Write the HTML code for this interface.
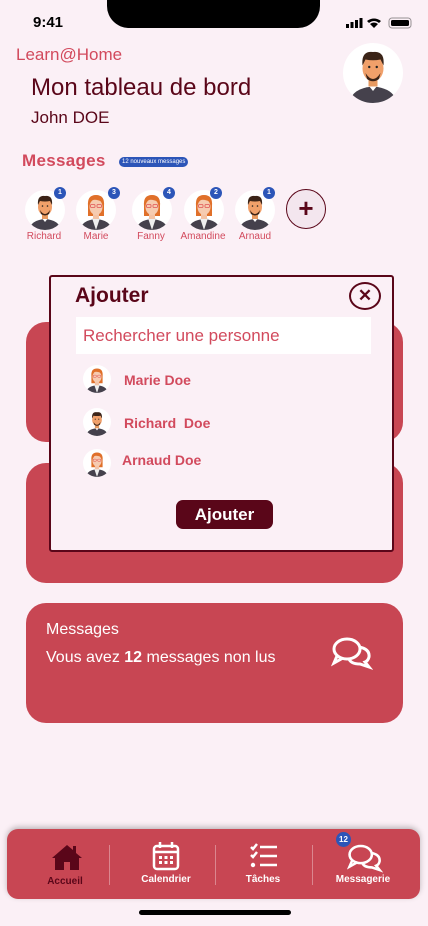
<!DOCTYPE html>
<html><head><meta charset="utf-8"><style>
*{margin:0;padding:0;box-sizing:border-box}
body{width:428px;height:926px;background:#fbf0f6;font-family:"Liberation Sans",sans-serif;position:relative;overflow:hidden}
.abs{position:absolute}
.notch{left:107px;top:0;width:213px;height:28px;background:#000;border-radius:0 0 22px 22px}
.card{left:26px;width:377px;height:120px;background:#c84653;border-radius:20px}
.av{position:absolute;width:40px;height:40px}
.badge{position:absolute;width:12px;height:12px;border-radius:6px;background:#2c55b8;color:#fff;font-size:7px;font-weight:bold;text-align:center;line-height:12px}
.nm{position:absolute;font-size:10px;color:#d24a5d;width:60px;text-align:center}
.nav{left:7px;top:829px;width:413px;height:70px;background:#c84653;border-radius:11px;box-shadow:0 -2px 6px rgba(0,0,0,.25)}
.nl{position:absolute;font-size:10px;font-weight:bold;color:#fff;text-align:center;width:90px}
.sep{position:absolute;top:16px;width:1px;height:40px;background:rgba(255,255,255,.35)}
</style></head><body>
<svg width="0" height="0" style="position:absolute">
<defs>
<symbol id="man" viewBox="0 0 40 40"><circle cx="20" cy="20" r="20" fill="#fff"/><clipPath id="cm"><circle cx="20" cy="20" r="20"/></clipPath><g clip-path="url(#cm)"><path d="M4 40 Q6 30 20 29 Q34 30 36 40Z" fill="#45414c"/><path d="M16 27 L20 32 L24 27Z" fill="#fff"/><rect x="17" y="22" width="6" height="7" fill="#e79a61"/><ellipse cx="20" cy="17" rx="7" ry="8.5" fill="#f0a06a"/><path d="M13 15 Q12 5 20 6 Q28 5 27 15 L25 11 Q20 12 15 11Z" fill="#3b2418"/><path d="M15 20 Q20 28 25 20 L24 24 Q20 27 16 24Z" fill="#3b2418"/><circle cx="17.5" cy="16" r=".8" fill="#222"/><circle cx="22.5" cy="16" r=".8" fill="#222"/></g></symbol>
<symbol id="wom" viewBox="0 0 40 40"><circle cx="20" cy="20" r="20" fill="#fff"/><clipPath id="cw"><circle cx="20" cy="20" r="20"/></clipPath><g clip-path="url(#cw)"><path d="M4 40 Q6 30 20 29 Q34 30 36 40Z" fill="#45414c"/><path d="M16 28 L20 40 L24 28Z" fill="#eee"/><path d="M12 16 Q11 5 20 5 Q29 5 28 16 L28 26 L12 26Z" fill="#e0702a"/><rect x="17" y="21" width="6" height="8" fill="#f3c3a6"/><ellipse cx="20" cy="17" rx="6.5" ry="8" fill="#f6cbb0"/><path d="M13 13 Q16 7 27 12 L26 9 Q20 5 14 9Z" fill="#e0702a"/><rect x="14.5" y="14.5" width="4.5" height="3" rx="1" fill="none" stroke="#e05555" stroke-width=".8"/><rect x="21" y="14.5" width="4.5" height="3" rx="1" fill="none" stroke="#e05555" stroke-width=".8"/></g></symbol>
</defs></svg>

<div class="abs notch"></div>
<div class="abs" style="left:33px;top:14px;font-size:15px;font-weight:bold">9:41</div>
<svg class="abs" style="left:346px;top:17px" width="68" height="12" viewBox="0 0 68 12"><rect x="0" y="7" width="3" height="4" fill="#000"/><rect x="4.5" y="5" width="3" height="6" fill="#000"/><rect x="9" y="3" width="3" height="8" fill="#000"/><rect x="13.5" y="1" width="3" height="10" fill="#000"/><path d="M21 4 Q28 -1 35 4 L33 6 Q28 2 23 6Z M24 7 Q28 4 32 7 L28 11Z" fill="#000"/><rect x="43" y="1" width="22" height="10" rx="3" fill="none" stroke="#000" stroke-opacity=".4"/><rect x="45" y="3" width="18" height="6" rx="1.5" fill="#000"/></svg>

<div class="abs" style="left:16px;top:45px;font-size:17px;color:#d24a5d">Learn@Home</div>
<div class="abs" style="left:31px;top:74px;font-size:24px;color:#5a0619">Mon tableau de bord</div>
<div class="abs" style="left:31px;top:108px;font-size:17px;color:#5a0619">John DOE</div>
<svg class="abs" style="left:343px;top:43px" width="60" height="60"><use href="#man"/></svg>

<div class="abs" style="left:22px;top:151px;font-size:17px;font-weight:bold;color:#d24a5d;letter-spacing:.3px">Messages</div>
<div class="abs" style="left:119px;top:157px;background:#2c55b8;color:#fff;font-size:6px;border-radius:5px;padding:1px 3px;line-height:8px">12 nouveaux messages</div>

<svg class="av" style="left:25px;top:190px"><use href="#man"/></svg><div class="badge" style="left:54px;top:187px">1</div><div class="nm" style="left:14px;top:231px">Richard</div>
<svg class="av" style="left:76px;top:190px"><use href="#wom"/></svg><div class="badge" style="left:108px;top:187px">3</div><div class="nm" style="left:66px;top:231px">Marie</div>
<svg class="av" style="left:132px;top:190px"><use href="#wom"/></svg><div class="badge" style="left:163px;top:187px">4</div><div class="nm" style="left:121px;top:231px">Fanny</div>
<svg class="av" style="left:184px;top:190px"><use href="#wom"/></svg><div class="badge" style="left:210px;top:187px">2</div><div class="nm" style="left:173px;top:231px">Amandine</div>
<svg class="av" style="left:235px;top:190px"><use href="#man"/></svg><div class="badge" style="left:263px;top:187px">1</div><div class="nm" style="left:225px;top:231px">Arnaud</div>
<div class="abs" style="left:286px;top:189px;width:40px;height:40px;border-radius:20px;border:1.5px solid #5a0619;background:#f3e6ee;color:#5a0619;font-size:26px;font-weight:bold;text-align:center;line-height:36px">+</div>

<div class="abs card" style="top:322px"></div>
<div class="abs card" style="top:463px"></div>
<div class="abs card" style="top:603px"></div>
<div class="abs" style="left:46px;top:621px;color:#fff;font-size:16px">Messages</div>
<div class="abs" style="left:46px;top:649px;color:#fff;font-size:16px">Vous avez <b>12</b> messages non lus</div>
<svg class="abs" style="left:331px;top:636px" width="42" height="34" viewBox="0 0 42 34" fill="none" stroke="#fff" stroke-width="3"><ellipse cx="16" cy="13" rx="13" ry="10"/><path d="M6 20 L3 27 L12 22"/><path d="M28 11 Q39 13 38 21 Q37 25 34 26 L38 31 L29 28 Q20 28 18 23"/></svg>

<div class="abs" style="left:49px;top:275px;width:345px;height:277px;background:#fbf0f6;border:2.5px solid #5a0619;border-radius:3px"></div>
<div class="abs" style="left:75px;top:284px;font-size:21px;font-weight:bold;color:#5a0619">Ajouter</div>
<div class="abs" style="left:349px;top:282px;width:32px;height:28px;border-radius:50%;border:2px solid #5a0619;color:#5a0619;font-size:17px;font-weight:bold;text-align:center;line-height:24px">✕</div>
<div class="abs" style="left:76px;top:317px;width:295px;height:37px;background:#fff;color:#d24a5d;font-size:17px;padding:9px 7px">Rechercher une personne</div>
<svg class="abs" style="left:83px;top:365px" width="28" height="28"><use href="#wom"/></svg>
<div class="abs" style="left:124px;top:372px;font-size:14px;font-weight:bold;color:#d24a5d">Marie Doe</div>
<svg class="abs" style="left:83px;top:408px" width="28" height="28"><use href="#man"/></svg>
<div class="abs" style="left:124px;top:415px;font-size:14px;font-weight:bold;color:#d24a5d">Richard &nbsp;Doe</div>
<svg class="abs" style="left:83px;top:449px" width="28" height="28"><use href="#wom"/></svg>
<div class="abs" style="left:122px;top:452px;font-size:14px;font-weight:bold;color:#d24a5d">Arnaud Doe</div>
<div class="abs" style="left:176px;top:500px;width:97px;height:29px;background:#5a0619;border-radius:7px;color:#fff;font-size:17px;font-weight:bold;text-align:center;line-height:29px">Ajouter</div>

<div class="abs nav">
<svg class="abs" style="left:44px;top:14px" width="32" height="28" viewBox="0 0 32 28"><path d="M16 2 L1 15 L4 15 L4 27 L28 27 L28 15 L31 15 L25 10 L25 3 L22 3 L22 7Z" fill="#5a0619"/><rect x="13" y="19" width="6" height="8" fill="#c84653"/></svg>
<div class="nl" style="left:13px;top:47px;color:#5a0619">Accueil</div>
<div class="sep" style="left:102px"></div>
<svg class="abs" style="left:145px;top:12px" width="28" height="30" viewBox="0 0 28 30" fill="none" stroke="#fff" stroke-width="2.5"><rect x="2" y="5" width="24" height="23" rx="3"/><path d="M2 11 H26 M8 1 V7 M20 1 V7"/><g fill="#fff" stroke="none"><rect x="7" y="15" width="3" height="3"/><rect x="12.5" y="15" width="3" height="3"/><rect x="18" y="15" width="3" height="3"/><rect x="7" y="20" width="3" height="3"/><rect x="12.5" y="20" width="3" height="3"/><rect x="18" y="20" width="3" height="3"/></g></svg>
<div class="nl" style="left:114px;top:45px">Calendrier</div>
<div class="sep" style="left:208px"></div>
<svg class="abs" style="left:242px;top:14px" width="30" height="26" viewBox="0 0 30 26" fill="none" stroke="#fff" stroke-width="2.5"><path d="M2 4 L4 6 L8 1 M2 12 L4 14 L8 9 M11 4 H28 M11 13 H28 M11 22 H28"/><circle cx="4" cy="22" r="2.2" fill="#fff" stroke="none"/></svg>
<div class="nl" style="left:211px;top:45px">Tâches</div>
<div class="sep" style="left:305px"></div>
<svg class="abs" style="left:340px;top:14px" width="36" height="30" viewBox="0 0 42 34" fill="none" stroke="#fff" stroke-width="3"><ellipse cx="16" cy="13" rx="13" ry="10"/><path d="M6 20 L3 27 L12 22"/><path d="M28 11 Q39 13 38 21 Q37 25 34 26 L38 31 L29 28 Q20 28 18 23"/></svg>
<div class="abs" style="left:329px;top:3px;width:15px;height:15px;border-radius:8px;background:#2c55b8;color:#fff;font-size:8px;font-weight:bold;text-align:center;line-height:15px">12</div>
<div class="nl" style="left:311px;top:45px">Messagerie</div>
</div>
<div class="abs" style="left:139px;top:910px;width:152px;height:5px;border-radius:3px;background:#000"></div>
</body></html>
